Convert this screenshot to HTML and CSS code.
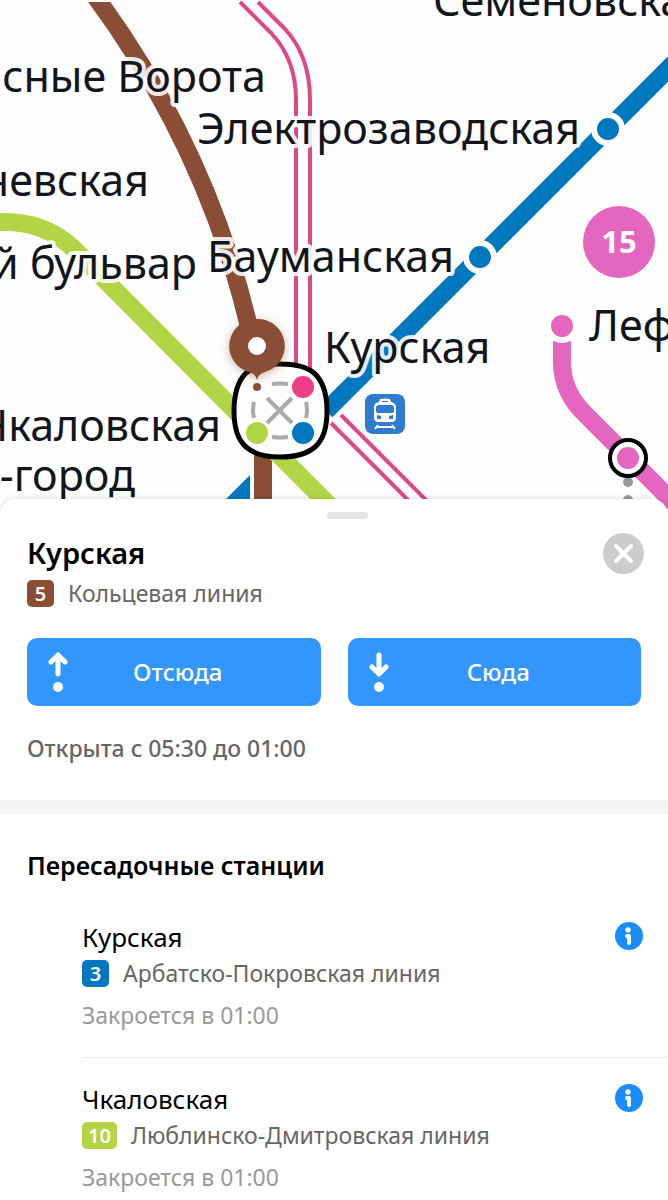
FILE: index.html
```html
<!DOCTYPE html>
<html lang="ru">
<head>
    <meta charset="UTF-8">
    <meta name="viewport" content="width=device-width, initial-scale=1.0">
    <title>Курская</title>
    <link rel="stylesheet" href="styles.css">
</head>
<body>
    <main>
        <svg class="map" viewBox="0 0 668 520" role="img" aria-label="Схема метро">
            <!-- Lines -->
            <g class="lines">
                <path class="brown" d="M92 -8C162 86 222 200 253 345M263 440V520"/>
                <path class="gap" d="M262 448L300 486M70 0H120"/>
                <path class="green" d="M-10 222H4C30 222 52 229 74 249L340 516"/>
                <path class="blue" d="M690 47L326 411"/>
                <path class="blue-fill" d="M250 475V520H205Z"/>
                <path class="mcc" d="M240 2L272 34Q296 60 296 100V390M258 2L285 29Q310 56 310 100V390M331 423L424 516M341 415L442 516"/>
                <path class="pink" d="M562 341V362Q562 391 584 413L680 509"/>
            </g>

            <!-- Station labels -->
            <g class="labels">
                <text x="266" y="92" text-anchor="end">Красные Ворота</text>
                <text x="433" y="16">Семёновская</text>
                <text x="197" y="144">Электрозаводская</text>
                <text x="149" y="196" text-anchor="end">невская</text>
                <text x="197" y="279" text-anchor="end">й бульвар</text>
                <text x="207" y="272">Бауманская</text>
                <text x="324" y="363">Курская</text>
                <text x="589" y="341">Лефортово</text>
                <text x="221" y="441" text-anchor="end">Чкаловская</text>
                <text x="135" y="491" text-anchor="end">-город</text>
            </g>

            <!-- Stations -->
            <g class="stops">
                <circle cx="608" cy="129" r="14" fill="#0078bf"/>
                <circle cx="480" cy="257" r="14" fill="#0078bf"/>
                <circle cx="562" cy="326" r="14" fill="#e466bf"/>
            </g>
            <circle cx="628" cy="482" r="5" fill="#999"/>
            <circle cx="628" cy="500" r="5" fill="#999"/>
            <circle cx="628" cy="458" r="18" fill="#fff" stroke="#000" stroke-width="4"/>
            <circle cx="628" cy="458" r="11" fill="#e466bf"/>
            <circle cx="619" cy="242" r="36" fill="#e466bf"/>
            <text class="line-number" x="619" y="253" text-anchor="middle">15</text>

            <!-- Transfer hub -->
            <path class="hub" d="M280 364C295 364 307 367 314 373C323 381 327 395 327 411C327 427 323 440 315 447C307 454 294 457 280 457C266 457 254 454 246 447C237 439 234 426 234 411C234 395 238 381 246 373C254 367 266 364 280 364Z"/>
            <path class="hub-marks" d="M272 384Q280 383 288 384M272 437Q280 438 288 437M254 402Q252 410 254 418M306 402Q308 410 306 418M267 398L292 423M292 398L267 423"/>
            <circle cx="303" cy="387" r="11" fill="#ee3f85"/>
            <circle cx="257" cy="433" r="11" fill="#b3d444"/>
            <circle cx="303" cy="433" r="11" fill="#0078bf"/>

            <!-- Selected station pin -->
            <circle cx="257" cy="387" r="4" fill="#894e35"/>
            <path class="pin" d="M257 319A27 27 0 0 1 265 372Q258 374 257 380Q256 374 249 372A27 27 0 0 1 257 319Z"/>
            <circle cx="257" cy="346" r="9" fill="#fff"/>

            <!-- Railway station -->
            <g transform="translate(365 394)">
                <rect width="40" height="40" rx="8" fill="#2f7bd0"/>
                <path d="M15 5Q20 4 25 5L26 8Q31 9 31 13V23Q31 28 27 28H13Q9 28 9 23V13Q9 9 14 8Z" fill="#fff"/>
                <path d="M17 7H23V8H17ZM14 11H26Q29 11 29 14V17Q29 19 26 19H14Q11 19 11 17V14Q11 11 14 11ZM12 21L16 22V25H12ZM28 21L24 22V25H28Z" fill="#2f7bd0"/>
                <path d="M13 31L10 35M27 31L30 35M12 33H28" fill="none" stroke="#fff" stroke-width="2"/>
            </g>
        </svg>

        <div class="sheet">
            <div class="handle"></div>
            <section class="station">
                <header>
                    <div>
                        <h1>Курская</h1>
                        <p class="line"><span class="badge brown-bg">5</span>Кольцевая линия</p>
                    </div>
                    <button class="close" type="button" aria-label="Закрыть">
                        <svg viewBox="0 0 41 41"><path d="M13 13L28 28M28 13L13 28"/></svg>
                    </button>
                </header>
                <div class="actions">
                    <button type="button">
                        <svg viewBox="0 0 20 40"><path d="M10 22V3M3 10L10 3L17 10"/><circle cx="10" cy="35" r="5"/></svg>
                        <span>Отсюда</span>
                    </button>
                    <button type="button">
                        <svg viewBox="0 0 20 40"><path d="M10 3V22M3 15L10 22L17 15"/><circle cx="10" cy="35" r="5"/></svg>
                        <span>Сюда</span>
                    </button>
                </div>
                <p class="hours">Открыта с 05:30 до 01:00</p>
            </section>

            <section class="transfers">
                <h2>Пересадочные станции</h2>
                <ul>
                    <li>
                        <div>
                            <h3>Курская</h3>
                            <p class="line"><span class="badge blue-bg">3</span>Арбатско-Покровская линия</p>
                            <p class="closing">Закроется в 01:00</p>
                        </div>
                        <button class="info" type="button" aria-label="Информация">
                            <svg viewBox="0 0 28 28"><circle cx="14" cy="14" r="14" fill="#198cff"/><circle cx="13" cy="8" r="2.7" fill="#fff"/><path d="M12 14H14V21"/></svg>
                        </button>
                    </li>
                    <li>
                        <div>
                            <h3>Чкаловская</h3>
                            <p class="line"><span class="badge green-bg">10</span>Люблинско-Дмитровская линия</p>
                            <p class="closing">Закроется в 01:00</p>
                        </div>
                        <button class="info" type="button" aria-label="Информация">
                            <svg viewBox="0 0 28 28"><circle cx="14" cy="14" r="14" fill="#198cff"/><circle cx="13" cy="8" r="2.7" fill="#fff"/><path d="M12 14H14V21"/></svg>
                        </button>
                    </li>
                </ul>
            </section>
        </div>
    </main>
</body>
</html>
```
FILE: styles.css
```css
* {
    box-sizing: border-box;
}

body {
    margin: 0;
    background: #fff;
    color: #000;
    font-family: "Noto Sans", sans-serif;
    font-size: 23px;
    line-height: 32px;
}

h1, h2, h3, p, ul {
    margin: 0;
    padding: 0;
}

button {
    border: 0;
    padding: 0;
    font: inherit;
    cursor: pointer;
}

svg {
    display: block;
}

main {
    overflow: hidden;
}

/* Map */
.map {
    width: 100%;
    height: auto;
    background: #fdfdfd;
}

.lines path {
    fill: none;
    stroke-width: 18px;
}

.lines .green {
    stroke: #b3d444;
}

.lines .brown {
    stroke: #894e35;
}

.lines .blue {
    stroke: #0078bf;
}

.lines .blue-fill {
    fill: #0078bf;
}

.lines .pink {
    stroke: #e466bf;
}

.lines .mcc {
    stroke: #de4885;
    stroke-width: 4px;
}

.lines .gap {
    stroke: #fdfdfd;
    stroke-width: 4px;
}

.labels {
    font-size: 43px;
    fill: #12151c;
    stroke: rgba(255, 255, 255, 0.88);
    stroke-width: 8px;
    stroke-linejoin: round;
    paint-order: stroke;
}

.stops {
    stroke: #fdfdfd;
    stroke-width: 6px;
}

.line-number {
    font-size: 31px;
    font-weight: 700;
    fill: #fff;
}

.hub {
    fill: #fdfdfd;
    stroke: #000;
    stroke-width: 5px;
}

.hub-marks {
    fill: none;
    stroke: #aaa;
    stroke-width: 4px;
}

.pin {
    fill: #894e35;
    filter: drop-shadow(0 2px 5px rgba(137, 78, 53, 0.4));
}

/* Bottom sheet */
.sheet {
    position: relative;
    margin-top: -21px;
    padding-top: 13px;
    border-radius: 16px 16px 0 0;
    background: #fff;
    box-shadow: 0 0 6px rgba(0, 0, 0, 0.15);
}

.handle {
    width: 41px;
    height: 7px;
    margin-left: 49%;
    border-radius: 4px;
    background: #e5e5e5;
}

.station {
    padding: 14px 27px 36px;
    border-bottom: 14px solid #f4f4f4;
}

.station header {
    display: flex;
    justify-content: space-between;
}

h1 {
    font-size: 29px;
    font-weight: 600;
    line-height: 40px;
}

.line {
    display: flex;
    align-items: center;
    gap: 14px;
    height: 40px;
    color: #666;
}

.badge {
    min-width: 27px;
    padding: 0 6px;
    border-radius: 5px;
    color: #fff;
    font-size: 20px;
    font-weight: 600;
    line-height: 27px;
    text-align: center;
}

.brown-bg {
    background: #894e35;
}

.blue-bg {
    background: #0078bf;
}

.green-bg {
    background: #b3d444;
}

.close {
    width: 41px;
    height: 41px;
    margin-right: -3px;
    border-radius: 50%;
    background: #ccc;
}

.close path {
    stroke: #fff;
    stroke-width: 4px;
    stroke-linecap: round;
}

.actions {
    display: flex;
    gap: 27px;
    margin: 25px 0 26px;
}

.actions button {
    display: grid;
    grid-template-columns: 20px 1fr;
    align-items: center;
    flex: 1;
    height: 68px;
    padding: 0 33px 0 21px;
    border-radius: 10px;
    background: #3396fd;
    color: #fff;
    font-size: 24px;
    font-weight: 500;
}

.actions path {
    fill: none;
    stroke: #fff;
    stroke-width: 5px;
    stroke-linecap: round;
    stroke-linejoin: round;
}

.actions circle {
    fill: #fff;
}

.hours {
    color: #666;
    font-weight: 500;
}

.transfers {
    padding: 35px 0 0 27px;
}

h2 {
    font-size: 25px;
    font-weight: 600;
}

.transfers ul {
    margin: 22px 0 0 55px;
    list-style: none;
}

.transfers li {
    display: flex;
    align-items: flex-start;
    justify-content: space-between;
    padding: 16px 25px 26px 0;
}

.transfers li + li {
    padding-top: 23px;
    border-top: 1px solid #e9e9e9;
}

h3 {
    font-size: 26px;
    font-weight: 400;
    line-height: 36px;
}

.transfers .line {
    height: 36px;
}

.closing {
    margin-top: 8px;
    color: #999;
}

.info {
    width: 28px;
    height: 28px;
    margin-top: 3px;
    background: none;
}

.info path {
    fill: none;
    stroke: #fff;
    stroke-width: 4px;
    stroke-linecap: round;
    stroke-linejoin: round;
}
```
